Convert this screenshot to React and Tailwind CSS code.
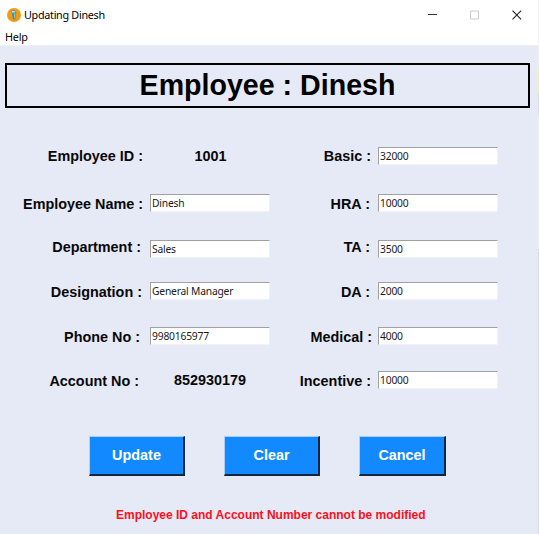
const rows = [
  {
    height: "h-[47px]",
    left: { label: "Employee ID :", labelClass: "pr-[7px]", value: "1001", valueClass: "pl-px" },
    right: { label: "Basic :", labelClass: "pr-[7px]", field: "32000" },
  },
  {
    height: "h-[46px]",
    left: { label: "Employee Name :", labelClass: "pr-[7px] mt-px", field: "Dinesh" },
    right: { label: "HRA :", labelClass: "pr-[8px] mt-px", field: "10000" },
  },
  {
    height: "h-[42px]",
    left: { label: "Department :", labelClass: "pr-[9px] -mt-[2px]", field: "Sales" },
    right: { label: "TA :", labelClass: "pr-[8px] -mt-[2px]", field: "3500" },
  },
  {
    height: "h-[45px]",
    left: { label: "Designation :", labelClass: "pr-[8px] mt-px", field: "General Manager" },
    right: { label: "DA :", labelClass: "pr-[8px] mt-px", field: "2000" },
  },
  {
    height: "h-[44px]",
    left: { label: "Phone No :", labelClass: "pr-[10px] mt-px", field: "9980165977" },
    right: { label: "Medical :", labelClass: "pr-[6px] mt-px", field: "4000" },
  },
  {
    height: "h-[65px]",
    left: { label: "Account No :", labelClass: "pr-[11px] mt-px", value: "852930179", valueClass: "" },
    right: { label: "Incentive :", labelClass: "pr-[7px] mt-px", field: "10000" },
  },
];

const systemFont = "font-['Noto_Sans',sans-serif]";

function Cell({ label, labelClass, field, value, valueClass, width }) {
  return (
    <div className="flex items-start">
      <div className={`${width} ${labelClass} shrink-0 whitespace-nowrap text-right text-[14.4px] leading-[18px] font-bold`}>
        {label}
      </div>
      {value ? (
        <div className={`${valueClass} w-[120px] text-center text-[14.4px] leading-[18px] font-bold`}>{value}</div>
      ) : (
        <div
          className={`${systemFont} h-[18px] w-[120px] whitespace-nowrap border border-t-[#a0a0a0] border-l-[#a0a0a0] border-r-[#f2f2f4] border-b-[#f2f2f4] bg-white pl-px text-[10.3px] leading-[16px] tracking-[-0.2px] text-[#1a1a1a]`}
        >
          {field}
        </div>
      )}
    </div>
  );
}

function Button({ children, className }) {
  return (
    <button
      className={`${className} h-[40px] border-t border-l border-r-2 border-b-2 border-t-[#a8d0fb] border-l-[#a8d0fb] border-r-[#10263f] border-b-[#10263f] bg-[#1289ff] text-center text-[14.4px] leading-[37px] font-bold text-white`}
    >
      {children}
    </button>
  );
}

function AppIcon() {
  return (
    <svg className="ml-[7px] h-[14px] w-[14px]" viewBox="0 0 14 14">
      <circle cx="7" cy="7" r="7" fill="#f39a12" />
      <path d="M4.3 2.4 8 2l1.2 3-.5 6.3-2.3.7-1-5z" fill="#4ba5a8" />
      <path d="M5 3h2.8v1.5H5z" fill="#c9dcd0" />
      <path d="M5.4 5.5h1.1v5h-.7z" fill="#3b8088" />
      <path d="M7.2 5.2h1v4.8h-1z" fill="#8cc9c6" />
    </svg>
  );
}

export default function App() {
  return (
    <div className="flex h-[534px] w-[539px] overflow-hidden bg-white font-['Liberation_Sans',Arial,sans-serif] text-[#080808]">
      <div className="flex w-[538px] flex-col">
        <div className={`${systemFont} flex h-[29px] items-center bg-white`}>
          <AppIcon />
          <span className="ml-[3px] text-[10.8px] leading-[16px] tracking-[-0.3px] text-black">Updating Dinesh</span>
          <svg className="ml-auto mr-[16px] h-[10px] w-[94px]" viewBox="0 0 94 10" fill="none">
            <path d="M0 4.5h9" stroke="#333" />
            <path d="M42.5 1h8v8h-8z" stroke="#ccc" />
            <path d="m84.5.7 8.6 8.6m0-8.6-8.6 8.6" stroke="#222" strokeWidth="1.1" />
          </svg>
        </div>
        <div className={`${systemFont} h-[16px] bg-white pl-[5px] text-[10.8px] leading-[16px] tracking-[-0.2px] text-black`}>Help</div>
        <div className="flex flex-1 flex-col border-t border-[#efeff0] bg-[#e6e9f6]">
          <div className="mt-[17px] ml-[5px] h-[45px] w-[525px] border-2 border-black text-center text-[28.6px] leading-[41px] font-bold text-black">
            Employee : Dinesh
          </div>
          <div className="mt-[39px] flex flex-col">
            {rows.map((row) => (
              <div key={row.left.label} className={`${row.height} flex shrink-0 items-start`}>
                <Cell {...row.left} width="w-[150px]" />
                <Cell {...row.right} width="w-[108px]" />
              </div>
            ))}
          </div>
          <div className="flex pl-[89px]">
            <Button className="w-[96px]">Update</Button>
            <Button className="ml-[39px] w-[96px]">Clear</Button>
            <Button className="ml-[39px] w-[87px]">Cancel</Button>
          </div>
          <div className="mt-[31px] pl-[116px] text-[12px] leading-[16px] font-bold whitespace-nowrap text-[#fc1020]">
            Employee ID and Account Number cannot be modified
          </div>
        </div>
      </div>
      <div className="flex w-px flex-col bg-[#d9d9e0]">
        <div className="h-[68px] bg-[#efefef]" />
        <div className="h-[25px] bg-[#f3eeb8]" />
        <div className="h-[22px] bg-[#dddddf]" />
        <div className="h-[134px] bg-[#efeff0]" />
      </div>
    </div>
  );
}
